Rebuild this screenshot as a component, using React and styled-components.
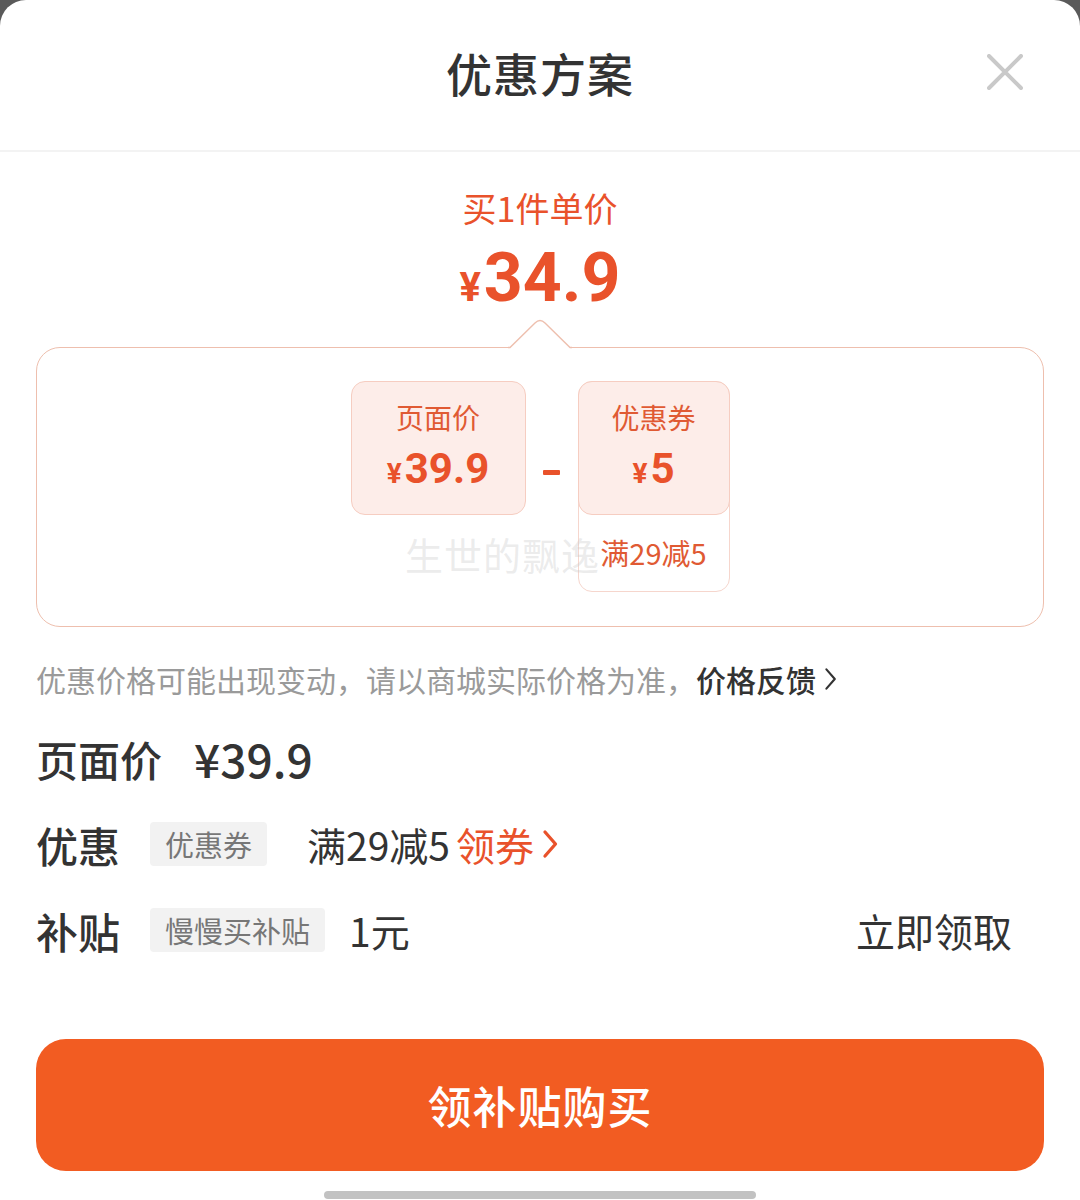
import styled, { createGlobalStyle } from "styled-components";

const ORANGE = "#e9522b";

const GlobalStyle = createGlobalStyle`
  html, body {
    margin: 0;
    padding: 0;
    background: #5a5a5a;
  }
  body {
    font-family: "Noto Sans CJK SC", "Noto Sans", sans-serif;
    color: #333;
  }
`;

const Chevron = ({ color = "#333", size = 24, stroke = 2.2 }) => (
  <svg width={size * 0.55} height={size} viewBox="0 0 11 20" fill="none">
    <polyline
      points="2,2 9,10 2,18"
      stroke={color}
      strokeWidth={stroke}
      strokeLinecap="round"
      strokeLinejoin="round"
    />
  </svg>
);

const CloseIcon = () => (
  <svg width="36" height="36" viewBox="0 0 36 36">
    <path
      d="M2 2 L34 34 M34 2 L2 34"
      stroke="#c9c9c9"
      strokeWidth="4"
      strokeLinecap="round"
    />
  </svg>
);

const App = () => {
  return (
    <>
      <GlobalStyle />
      <Sheet>
        <Header>
          <span />
          <Title>优惠方案</Title>
          <CloseButton>
            <CloseIcon />
          </CloseButton>
        </Header>

        <Summary>
          <SummaryLabel>买1件单价</SummaryLabel>
          <BigPrice>
            <Yen $size={40}>¥</Yen>34.9
          </BigPrice>
        </Summary>

        <Breakdown>
          <Notch width="64" height="30" viewBox="0 0 64 30">
            <path d="M0 28 L2 28 L27 4 Q32 -1 37 4 L62 28 L64 28 L64 30 L0 30 Z" fill="#fff" />
            <path
              d="M0 28.5 L2 28.5 L27 4 Q32 -1 37 4 L62 28.5 L64 28.5"
              fill="none"
              stroke="#eebfae"
              strokeWidth="1.4"
            />
          </Notch>
          <Cards>
            <PriceCard>
              <CardLabel>页面价</CardLabel>
              <CardValue>
                <Yen $size={28}>¥</Yen>39.9
              </CardValue>
            </PriceCard>
            <Minus>
              <Dash />
            </Minus>
            <CouponFrame>
              <PriceCard $inner>
                <CardLabel>优惠券</CardLabel>
                <CardValue>
                  <Yen $size={28}>¥</Yen>5
                </CardValue>
              </PriceCard>
              <CouponRule>满29减5</CouponRule>
            </CouponFrame>
          </Cards>
          <Watermark>生世的飘逸</Watermark>
        </Breakdown>

        <Note>
          优惠价格可能出现变动，请以商城实际价格为准，
          <NoteLink>
            价格反馈
            <Chevron color="#333" size={24} stroke={1.8} />
          </NoteLink>
        </Note>

        <Rows>
          <Row>
            <RowLabel>页面价</RowLabel>
            <PageValue>¥39.9</PageValue>
          </Row>
          <Row>
            <RowLabel>优惠</RowLabel>
            <Tag>优惠券</Tag>
            <RowValue $gap={40}>
              满29减5
              <CouponLink>
                领券
                <Chevron color={ORANGE} size={30} stroke={2.2} />
              </CouponLink>
            </RowValue>
          </Row>
          <Row>
            <RowLabel>补贴</RowLabel>
            <Tag>慢慢买补贴</Tag>
            <RowValue $gap={24}>1元</RowValue>
            <RowAction>立即领取</RowAction>
          </Row>
        </Rows>

        <BuyButton>领补贴购买</BuyButton>
        <HomeBar />
      </Sheet>
    </>
  );
};

const Sheet = styled.div`
  width: 1080px;
  height: 1200px;
  background: #fff;
  border-radius: 26px 26px 0 0;
  display: flex;
  flex-direction: column;
  overflow: hidden;
`;

const Header = styled.div`
  height: 152px;
  box-sizing: border-box;
  border-bottom: 2px solid #f3f3f3;
  display: grid;
  grid-template-columns: 1fr auto 1fr;
  align-items: center;
`;

const Title = styled.div`
  font-size: 46px;
  font-weight: 500;
  color: #333;
  letter-spacing: 1px;
  margin-top: -6px;
`;

const CloseButton = styled.div`
  justify-self: end;
  margin-right: 57px;
  margin-top: -6px;
  display: flex;
`;

const Summary = styled.div`
  display: flex;
  flex-direction: column;
  align-items: center;
  padding-top: 34px;
`;

const SummaryLabel = styled.div`
  font-size: 34px;
  line-height: 44px;
  color: ${ORANGE};
`;

const BigPrice = styled.div`
  font-family: Roboto, "Noto Sans", sans-serif;
  font-weight: 700;
  font-size: 68px;
  line-height: 80px;
  color: ${ORANGE};
  margin-top: 8px;
  display: flex;
  align-items: baseline;
`;

const Yen = styled.span`
  font-family: Roboto, "Noto Sans", sans-serif;
  font-weight: 700;
  font-size: ${(p) => p.$size}px;
  margin-right: 3px;
`;

const Breakdown = styled.div`
  position: relative;
  margin: 19px 36px 0;
  height: 280px;
  box-sizing: border-box;
  border: 1.4px solid #eebfae;
  border-radius: 24px;
  padding-top: 33px;
`;

const Notch = styled.svg`
  position: absolute;
  top: -29px;
  left: 50%;
  transform: translateX(-50%);
  display: block;
`;

const Cards = styled.div`
  display: flex;
  justify-content: center;
  align-items: flex-start;
`;

const PriceCard = styled.div`
  width: ${(p) => (p.$inner ? "auto" : "175px")};
  height: 134px;
  box-sizing: border-box;
  margin: ${(p) => (p.$inner ? "-1px -1px 0" : "0")};
  background: #fdede9;
  border: 1px solid #f6cdc1;
  border-radius: 14px;
  display: flex;
  flex-direction: column;
  align-items: center;
  justify-content: center;
  gap: 8px;
`;

const CardLabel = styled.div`
  font-size: 28px;
  line-height: 38px;
  color: #e05a33;
`;

const CardValue = styled.div`
  font-family: Roboto, "Noto Sans", sans-serif;
  font-weight: 700;
  font-size: 42px;
  line-height: 50px;
  color: ${ORANGE};
  display: flex;
  align-items: baseline;
`;

const Minus = styled.div`
  width: 52px;
  height: 134px;
  display: flex;
  justify-content: center;
  padding-top: 89px;
  box-sizing: border-box;
`;

const Dash = styled.div`
  width: 17px;
  height: 5px;
  background: ${ORANGE};
  border-radius: 1px;
`;

const CouponFrame = styled.div`
  width: 152px;
  height: 211px;
  box-sizing: border-box;
  border: 1px solid #f6d6cd;
  border-radius: 14px;
  display: flex;
  flex-direction: column;
`;

const CouponRule = styled.div`
  flex: 1;
  display: flex;
  align-items: center;
  justify-content: center;
  font-size: 29px;
  color: #e05a33;
  padding-bottom: 2px;
`;

const Watermark = styled.div`
  position: absolute;
  left: 368px;
  top: 178px;
  font-size: 38px;
  color: rgba(200, 200, 200, 0.35);
  letter-spacing: 1px;
  pointer-events: none;
`;

const Note = styled.div`
  margin: 31px 36px 0;
  font-size: 30px;
  line-height: 42px;
  color: #9a9a9a;
  display: flex;
  align-items: center;
  white-space: nowrap;
`;

const NoteLink = styled.span`
  color: #333;
  font-weight: 500;
  display: inline-flex;
  align-items: center;
  gap: 8px;
`;

const Rows = styled.div`
  margin-top: 15px;
  padding: 0 68px 0 36px;
  display: flex;
  flex-direction: column;
`;

const Row = styled.div`
  height: 86px;
  display: flex;
  align-items: center;
`;

const RowLabel = styled.div`
  font-size: 42px;
  font-weight: 500;
  color: #333;
  min-width: 114px;
`;

const PageValue = styled.div`
  margin-left: 32px;
  font-size: 46px;
  font-weight: 500;
  color: #333;
`;

const Tag = styled.div`
  height: 44px;
  padding: 0 15px;
  background: #f2f2f2;
  border-radius: 4px;
  display: flex;
  align-items: center;
  font-size: 29px;
  color: #777;
`;

const RowValue = styled.div`
  margin-left: ${(p) => p.$gap}px;
  font-size: 39px;
  color: #333;
  display: flex;
  align-items: center;
`;

const CouponLink = styled.span`
  color: ${ORANGE};
  margin-left: 6px;
  display: inline-flex;
  align-items: center;
  gap: 8px;
`;

const RowAction = styled.div`
  margin-left: auto;
  font-size: 39px;
  color: #333;
`;

const BuyButton = styled.div`
  margin: 66px 36px 0;
  height: 132px;
  border-radius: 30px;
  background: #f25c22;
  color: #fff;
  font-size: 44px;
  font-weight: 500;
  letter-spacing: 1px;
  display: flex;
  align-items: center;
  justify-content: center;
`;

const HomeBar = styled.div`
  align-self: center;
  width: 432px;
  height: 8px;
  margin-top: 20px;
  border-radius: 4px;
  background: #c2c2c2;
`;

export default App;
